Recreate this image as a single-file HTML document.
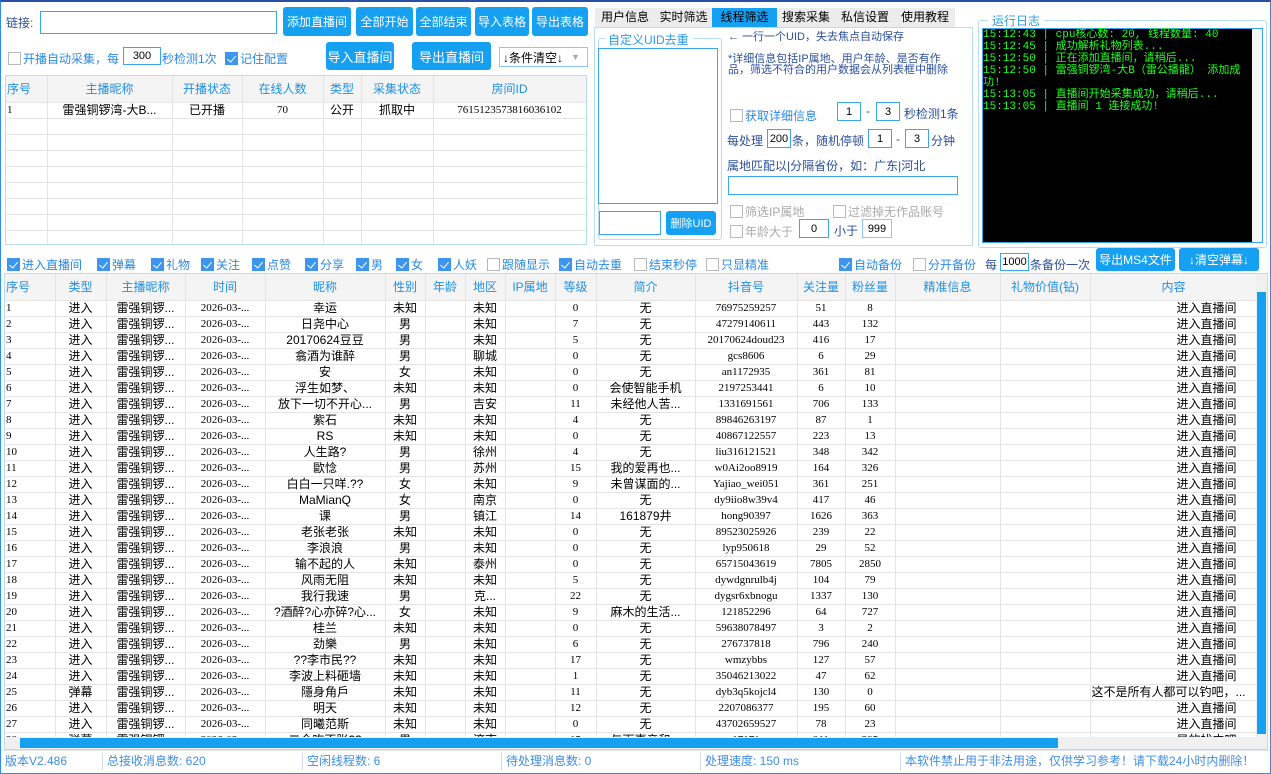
<!DOCTYPE html>
<html><head><meta charset="utf-8"><style>
*{box-sizing:border-box;margin:0;padding:0}
body{width:1271px;height:774px;overflow:hidden;background:#fff;font-family:"Liberation Sans","Noto Sans CJK SC",sans-serif;font-size:12px;color:#000;position:relative}
.a{position:absolute}
.frame{left:0;top:0;width:1271px;height:774px;border:1px solid #2f8de4;border-top:2px solid #2b4fa8}
.btn{position:absolute;background:#16a0f2;color:#fff;border-radius:3px;font-size:12px;text-align:center;display:flex;align-items:center;justify-content:center;white-space:nowrap}
.inp{position:absolute;border:1px solid #3aa6ee;background:#fff;text-align:center;font-size:11px;display:flex;align-items:center;justify-content:center}
.cb{position:absolute;display:flex;align-items:center;font-size:12px;color:#2a8ae6;white-space:nowrap}
.cb i{display:inline-block;width:13px;height:13px;border:1px solid #b8b8b8;background:#fff;margin-right:2px;position:relative}
.cb i.on{background:#3d95ee;border-color:#3d95ee}
.cb i.on:after{content:"";position:absolute;left:3px;top:1px;width:4px;height:7px;border:solid #fff;border-width:0 1px 1px 0;transform:rotate(40deg)}
.cb.dis{color:#aaa}
.lbl{position:absolute;color:#2c4f9a;font-size:12px;white-space:nowrap}
table{border-collapse:collapse;table-layout:fixed}
td,th{border-right:1px solid #e4e4e4;border-bottom:1px solid #e4e4e4;white-space:nowrap;overflow:hidden;text-align:center;font-weight:normal;font-size:12px;padding:0 1px}
th{color:#1f8fe6;font-size:12px;background:#f4f4f4}
.tb td{height:16px;line-height:15px}
.tb th{height:26px}
.num{font-family:"Liberation Serif","Noto Serif CJK SC",serif;font-size:11px}
.log{font-family:"Liberation Mono","Noto Sans CJK SC",monospace;color:#20ff20;font-size:11px;line-height:12px}
.st{position:absolute;top:753px;font-size:12px;color:#3f8ee4;height:17px;line-height:17px;border-left:1px solid #d0d8e8;padding-left:4px}
</style></head><body>
<div class="a frame"></div>

<div class="lbl" style="left:6px;top:14px;">链接:</div>
<div class="inp" style="left:40px;top:11px;width:237px;height:23px;"></div>
<div class="btn" style="left:283px;top:7px;width:68px;height:29px;">添加直播间</div>
<div class="btn" style="left:356px;top:7px;width:57px;height:29px;">全部开始</div>
<div class="btn" style="left:416px;top:7px;width:55px;height:29px;">全部结束</div>
<div class="btn" style="left:475px;top:7px;width:54px;height:29px;">导入表格</div>
<div class="btn" style="left:532px;top:7px;width:56px;height:29px;">导出表格</div>

<div class="cb" style="left:8px;top:50px;"><i></i>开播自动采集，每</div>
<div class="inp" style="left:123px;top:47px;width:38px;height:18px;">300</div>
<div class="cb" style="left:162px;top:50px;">秒检测1次</div>
<div class="cb" style="left:225px;top:50px;"><i class="on"></i>记住配置</div>
<div class="btn" style="left:326px;top:42px;width:68px;height:28px;font-size:13px;">导入直播间</div>
<div class="btn" style="left:412px;top:42px;width:79px;height:28px;font-size:13px;">导出直播间</div>
<div class="inp" style="left:499px;top:47px;width:89px;height:20px;border-color:#8cc8f0;justify-content:flex-start;padding-left:3px;font-size:12px;">↓条件清空↓<span style="color:#aaa;font-size:9px;margin-left:8px">▼</span></div>

<div class="a" style="left:5px;top:75px;width:582px;height:170px;border:1px solid #b9dcf5;overflow:hidden">
<table class="tb" style="width:580px">
<colgroup><col style="width:41px"><col style="width:125px"><col style="width:70px"><col style="width:81px"><col style="width:38px"><col style="width:72px"><col style="width:153px"></colgroup>
<tr><th style="height:24px;text-align:left">序号</th><th>主播昵称</th><th>开播状态</th><th>在线人数</th><th>类型</th><th>采集状态</th><th>房间ID</th></tr>
<tr><td style="text-align:left" class="num">1</td><td>雷强铜锣湾-大B...</td><td>已开播</td><td class="num">70</td><td>公开</td><td>抓取中</td><td class="num">7615123573816036102</td></tr>
<tr><td></td><td></td><td></td><td></td><td></td><td></td><td></td></tr>
<tr><td></td><td></td><td></td><td></td><td></td><td></td><td></td></tr>
<tr><td></td><td></td><td></td><td></td><td></td><td></td><td></td></tr>
<tr><td></td><td></td><td></td><td></td><td></td><td></td><td></td></tr>
<tr><td></td><td></td><td></td><td></td><td></td><td></td><td></td></tr>
<tr><td></td><td></td><td></td><td></td><td></td><td></td><td></td></tr>
<tr><td></td><td></td><td></td><td></td><td></td><td></td><td></td></tr>
<tr><td></td><td></td><td></td><td></td><td></td><td></td><td></td></tr>
</table></div>

<div class="a" style="left:595px;top:8px;width:360px;height:19px;background:#ececec;font-size:12px;display:flex">
<div style="width:60px;text-align:center;line-height:19px">用户信息</div>
<div style="width:57px;text-align:center;line-height:19px">实时筛选</div>
<div style="width:65px;text-align:center;line-height:19px;background:#16a0f2;color:#000">线程筛选</div>
<div style="width:58px;text-align:center;line-height:19px">搜索采集</div>
<div style="width:60px;text-align:center;line-height:19px">私信设置</div>
<div style="width:60px;text-align:center;line-height:19px">使用教程</div>
</div>
<div class="a" style="left:594px;top:27px;width:379px;height:219px;border:1px solid #b9dcf5"></div>
<div class="a" style="left:598px;top:38px;width:124px;height:202px;border:1px solid #b9dcf5;border-radius:3px"></div>
<div class="a" style="left:605px;top:31px;background:#fff;padding:0 3px;color:#2a9be6;font-size:12px">自定义UID去重</div>
<div class="a" style="left:598px;top:48px;width:120px;height:156px;border:1px solid #3aa6ee"></div>
<div class="inp" style="left:599px;top:211px;width:62px;height:24px;"></div>
<div class="btn" style="left:666px;top:211px;width:50px;height:24px;font-size:11px">删除UID</div>
<div class="lbl" style="left:728px;top:28px;font-size:11px">← 一行一个UID，失去焦点自动保存</div>
<div class="lbl" style="left:728px;top:54px;font-size:11px;line-height:11px;white-space:normal;width:232px">*详细信息包括IP属地、用户年龄、是否有作品，筛选不符合的用户数据会从列表框中删除</div>
<div class="cb" style="left:730px;top:107px;"><i></i>获取详细信息</div>
<div class="inp" style="left:837px;top:102px;width:24px;height:19px;">1</div>
<div class="lbl" style="left:866px;top:104px">-</div>
<div class="inp" style="left:876px;top:102px;width:24px;height:19px;">3</div>
<div class="lbl" style="left:904px;top:105px">秒检测1条</div>
<div class="lbl" style="left:727px;top:132px">每处理</div>
<div class="inp" style="left:767px;top:129px;width:24px;height:19px;">200</div>
<div class="lbl" style="left:792px;top:132px">条，随机停顿</div>
<div class="inp" style="left:868px;top:129px;width:24px;height:19px;">1</div>
<div class="lbl" style="left:896px;top:132px">-</div>
<div class="inp" style="left:905px;top:129px;width:24px;height:19px;">3</div>
<div class="lbl" style="left:931px;top:132px">分钟</div>
<div class="lbl" style="left:727px;top:157px">属地匹配以|分隔省份，如：广东|河北</div>
<div class="inp" style="left:728px;top:176px;width:230px;height:19px;"></div>
<div class="cb dis" style="left:730px;top:203px;"><i></i>筛选IP属地</div>
<div class="cb dis" style="left:833px;top:203px;"><i></i>过滤掉无作品账号</div>
<div class="cb dis" style="left:730px;top:223px;"><i></i>年龄大于</div>
<div class="inp" style="left:799px;top:219px;width:30px;height:19px;">0</div>
<div class="lbl" style="left:834px;top:222px">小于</div>
<div class="inp" style="left:862px;top:219px;width:30px;height:19px;border-color:#8cc8f0">999</div>

<div class="a" style="left:978px;top:20px;width:289px;height:228px;border:1px solid #b9dcf5;border-radius:3px"></div>
<div class="a" style="left:988px;top:12px;background:#fff;padding:0 4px;color:#2a9be6;font-size:12px">运行日志</div>
<div class="a" style="left:982px;top:28px;width:281px;height:215px;border:1px solid #3aa6ee;background:#000"></div>
<div class="a" style="left:1252px;top:29px;width:10px;height:213px;background:#f4f4f4"></div>
<div class="a log" style="left:983px;top:29px;width:268px">
15:12:43 | cpu核心数: 20, 线程数量: 40<br>15:12:45 | 成功解析礼物列表...<br>15:12:50 | 正在添加直播间，请稍后...<br>15:12:50 | 雷强铜锣湾-大B（雷公播龍） 添加成功!<br>15:13:05 | 直播间开始采集成功，请稍后...<br>15:13:05 | 直播间 1 连接成功!</div>

<div class="cb" style="left:7px;top:256px;"><i class="on"></i>进入直播间</div>
<div class="cb" style="left:97px;top:256px;"><i class="on"></i>弹幕</div>
<div class="cb" style="left:151px;top:256px;"><i class="on"></i>礼物</div>
<div class="cb" style="left:201px;top:256px;"><i class="on"></i>关注</div>
<div class="cb" style="left:252px;top:256px;"><i class="on"></i>点赞</div>
<div class="cb" style="left:305px;top:256px;"><i class="on"></i>分享</div>
<div class="cb" style="left:356px;top:256px;"><i class="on"></i>男</div>
<div class="cb" style="left:396px;top:256px;"><i class="on"></i>女</div>
<div class="cb" style="left:438px;top:256px;"><i class="on"></i>人妖</div>
<div class="cb" style="left:487px;top:256px;"><i></i>跟随显示</div>
<div class="cb" style="left:559px;top:256px;"><i class="on"></i>自动去重</div>
<div class="cb" style="left:634px;top:256px;"><i></i>结束秒停</div>
<div class="cb" style="left:706px;top:256px;"><i></i>只显精准</div>
<div class="cb" style="left:839px;top:256px;"><i class="on"></i>自动备份</div>
<div class="cb" style="left:913px;top:256px;"><i></i>分开备份</div>
<div class="lbl" style="left:985px;top:256px">每</div>
<div class="inp" style="left:1000px;top:253px;width:29px;height:18px;font-size:11px">1000</div>
<div class="lbl" style="left:1030px;top:256px">条备份一次</div>
<div class="btn" style="left:1096px;top:248px;width:79px;height:23px">导出MS4文件</div>
<div class="btn" style="left:1179px;top:248px;width:80px;height:23px">↓清空弹幕↓</div>

<div class="a" style="left:4px;top:273px;width:1264px;height:477px;border:1px solid #b9dcf5;overflow:hidden">
<table class="tb" style="width:1252px">
<colgroup><col style="width:50px"><col style="width:51px"><col style="width:79px"><col style="width:80px"><col style="width:120px"><col style="width:40px"><col style="width:40px"><col style="width:40px"><col style="width:50px"><col style="width:41px"><col style="width:99px"><col style="width:102px"><col style="width:48px"><col style="width:50px"><col style="width:105px"><col style="width:90px"><col style="width:167px"></colgroup>
<tr><th style="text-align:left">序号</th><th>类型</th><th>主播昵称</th><th>时间</th><th>昵称</th><th>性别</th><th>年龄</th><th>地区</th><th>IP属地</th><th>等级</th><th>简介</th><th>抖音号</th><th>关注量</th><th>粉丝量</th><th>精准信息</th><th>礼物价值(钻)</th><th>内容</th></tr>
<tbody id="b"></tbody>
</table>
<div class="a" style="left:1251px;top:0;width:12px;height:476px;background:#f0f0f0"></div>
<div class="a" style="left:1252px;top:18px;width:9px;height:442px;background:#16a0f2"></div>
<div class="a" style="left:0;top:463px;width:1263px;height:12px;background:#f0f0f0"></div>
<div class="a" style="left:15px;top:464px;width:1038px;height:10px;background:#16a0f2"></div>
</div>

<div class="a" style="left:1px;top:750px;width:1269px;height:23px;background:#fff;border-top:1px solid #dfe6f0"></div>
<div class="st" style="left:1px;border:0">版本V2.486</div>
<div class="st" style="left:102px;">总接收消息数: 620</div>
<div class="st" style="left:302px;">空闲线程数: 6</div>
<div class="st" style="left:501px;">待处理消息数: 0</div>
<div class="st" style="left:700px;">处理速度: 150 ms</div>
<div class="st" style="left:900px;">本软件禁止用于非法用途，仅供学习参考！请下载24小时内删除！</div>

<script>
var d=[["幸运","未知","未知","0","无","76975259257","51","8"],
["日尧中心","男","未知","7","无","47279140611","443","132"],
["20170624豆豆","男","未知","5","无","20170624doud23","416","17"],
["翕酒为谁醉","男","聊城","0","无","gcs8606","6","29"],
["安","女","未知","0","无","an1172935","361","81"],
["浮生如梦、","未知","未知","0","会使智能手机","2197253441","6","10"],
["放下一切不开心...","男","吉安","11","未经他人苦...","1331691561","706","133"],
["紫石","未知","未知","4","无","89846263197","87","1"],
["RS","未知","未知","0","无","40867122557","223","13"],
["人生路?","男","徐州","4","无","liu316121521","348","342"],
["歐惗","男","苏州","15","我的爱再也...","w0Ai2oo8919","164","326"],
["白白一只咩.??","女","未知","9","未曾谋面的...","Yajiao_wei051","361","251"],
["MaMianQ","女","南京","0","无","dy9iio8w39v4","417","46"],
["课","男","镇江","14","161879井","hong90397","1626","363"],
["老张老张","未知","未知","0","无","89523025926","239","22"],
["李浪浪","男","未知","0","无","lyp950618","29","52"],
["输不起的人","未知","泰州","0","无","65715043619","7805","2850"],
["风雨无阻","未知","未知","5","无","dywdgnrulb4j","104","79"],
["我行我速","男","克...","22","无","dygsr6xbnogu","1337","130"],
["?酒醉?心亦碎?心...","女","未知","9","麻木的生活...","121852296","64","727"],
["桂兰","未知","未知","0","无","59638078497","3","2"],
["劲樂","男","未知","6","无","276737818","796","240"],
["??李市民??","未知","未知","17","无","wmzybbs","127","57"],
["李波上料砸墙","未知","未知","1","无","35046213022","47","62"],
["隱身角戶","未知","未知","11","无","dyb3q5kojcl4","130","0"],
["明天","未知","未知","12","无","2207086377","195","60"],
["同曦范斯","未知","未知","0","无","43702659527","78","23"],
["二今吃不胀??","男","济南","15","与下事亲和...","17171","911","395"]];
var h="";d.forEach(function(r,i){var t=(i==24||i==27)?"弹幕":"进入";var c=i==24?"这不是所有人都可以钓吧，...":(i==27?"早的找中吧":"进入直播间");
h+="<tr><td style='text-align:left' class='num'>"+(i+1)+"</td><td>"+t+"</td><td>雷强铜锣...</td><td class='num'>2026-03-...</td><td>"+r[0]+"</td><td>"+r[1]+"</td><td></td><td>"+r[2]+"</td><td></td><td class='num'>"+r[3]+"</td><td>"+r[4]+"</td><td class='num'>"+r[5]+"</td><td class='num'>"+r[6]+"</td><td class='num'>"+r[7]+"</td><td></td><td></td><td style='text-align:right;padding-right:20px'>"+c+"</td></tr>";});
document.getElementById("b").innerHTML=h;
</script>
</body></html>
